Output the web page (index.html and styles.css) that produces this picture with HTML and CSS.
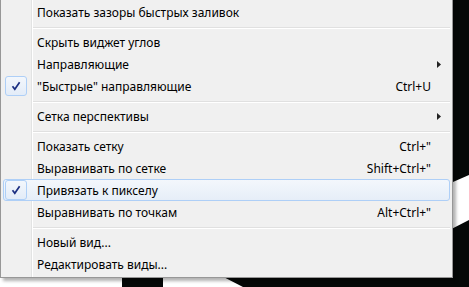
FILE: index.html
```html
<!DOCTYPE html>
<html>

<head>
  <title>Меню вида</title>
  <link rel="stylesheet" href="styles.css">
</head>

<body>
  <svg class="backdrop" width="469" height="287" viewBox="0 0 469 287">
    <polygon points="430,0 469,0 469,175 430,192" fill="#050807" />
    <polygon points="210,270 430,270 430,240 469,220 469,287 243,287" fill="#050807" />
    <rect x="122" y="270" width="41" height="17" fill="#050807" />
  </svg>

  <div class="menu">
    <div class="item"><span class="check"></span><span class="label">Показать зазоры быстрых заливок</span><span class="keys"></span><span class="sub"></span></div>
    <div class="sep"></div>
    <div class="item"><span class="check"></span><span class="label">Скрыть виджет углов</span><span class="keys"></span><span class="sub"></span></div>
    <div class="item"><span class="check"></span><span class="label">Направляющие</span><span class="keys"></span><span class="sub"><svg width="4" height="7" viewBox="0 0 4 7"><polygon points="0,0 4,3.5 0,7" fill="#222" /></svg></span></div>
    <div class="item"><span class="check on"><svg width="10" height="10" viewBox="0 0 10 10"><path d="M1.5 5.2 L3.8 8.3 L8.6 1.2" fill="none" stroke="#1c2f82" stroke-width="1.7" /></svg></span><span class="label">"Быстрые" направляющие</span><span class="keys">Ctrl+U</span><span class="sub"></span></div>
    <div class="sep"></div>
    <div class="item"><span class="check"></span><span class="label">Сетка перспективы</span><span class="keys"></span><span class="sub"><svg width="4" height="7" viewBox="0 0 4 7"><polygon points="0,0 4,3.5 0,7" fill="#222" /></svg></span></div>
    <div class="sep"></div>
    <div class="item"><span class="check"></span><span class="label">Показать сетку</span><span class="keys">Ctrl+"</span><span class="sub"></span></div>
    <div class="item"><span class="check"></span><span class="label">Выравнивать по сетке</span><span class="keys">Shift+Ctrl+"</span><span class="sub"></span></div>
    <div class="item hover"><span class="check on"><svg width="10" height="10" viewBox="0 0 10 10"><path d="M1.5 5.2 L3.8 8.3 L8.6 1.2" fill="none" stroke="#1c2f82" stroke-width="1.7" /></svg></span><span class="label">Привязать к пикселу</span><span class="keys"></span><span class="sub"></span></div>
    <div class="item"><span class="check"></span><span class="label">Выравнивать по точкам</span><span class="keys">Alt+Ctrl+"</span><span class="sub"></span></div>
    <div class="sep"></div>
    <div class="item"><span class="check"></span><span class="label">Новый вид...</span><span class="keys"></span><span class="sub"></span></div>
    <div class="item"><span class="check"></span><span class="label">Редактировать виды...</span><span class="keys"></span><span class="sub"></span></div>
  </div>
</body>

</html>
```

FILE: styles.css
```css
html,
body {
  margin: 0;
  padding: 0;
}

body {
  position: relative;
  width: 469px;
  height: 287px;
  overflow: hidden;
  background-color: #FFF;
  font-family: "Noto Sans", "DejaVu Sans", sans-serif;
  font-size: 12px;
  color: #000;
}

.backdrop {
  position: absolute;
  left: 0;
  top: 0;
}

.menu {
  position: relative;
  box-sizing: border-box;
  width: 453px;
  padding: 1px 0 2px 0;
  border: 1px solid #979797;
  border-top: none;
  background-color: #F0F0F0;
  background-image: linear-gradient(to right, transparent 30px, #E2E3E3 30px, #E2E3E3 31px, #FFF 31px, #FFF 32px, transparent 32px);
  box-shadow: 3px 3px 3px rgba(0, 0, 0, 0.3);
}

.item {
  display: flex;
  align-items: center;
  height: 22px;
  box-sizing: border-box;
  margin: 0 2px;
  border: 1px solid transparent;
  border-radius: 3px;
}

.item.hover {
  border-color: #AECFF7;
  background: linear-gradient(#F3F7FC, #E6EEF8);
}

.check {
  box-sizing: border-box;
  width: 22px;
  height: 20px;
  margin-left: 1px;
  display: flex;
  align-items: center;
  justify-content: center;
  border: 1px solid transparent;
  border-radius: 3px;
}

.check.on {
  border-color: #AECFF7;
  background: linear-gradient(#F3F7FC, #E3ECF8);
}

.label {
  flex: 1;
  margin-left: 10px;
  white-space: nowrap;
}

.keys {
  white-space: nowrap;
}

.sub {
  width: 18px;
  box-sizing: border-box;
  padding-left: 6px;
  display: flex;
  align-items: center;
}

.sep {
  height: 1px;
  margin: 4px 2px 2px 32px;
  background-color: #E0E0E0;
  border-bottom: 1px solid #FFF;
}
```
